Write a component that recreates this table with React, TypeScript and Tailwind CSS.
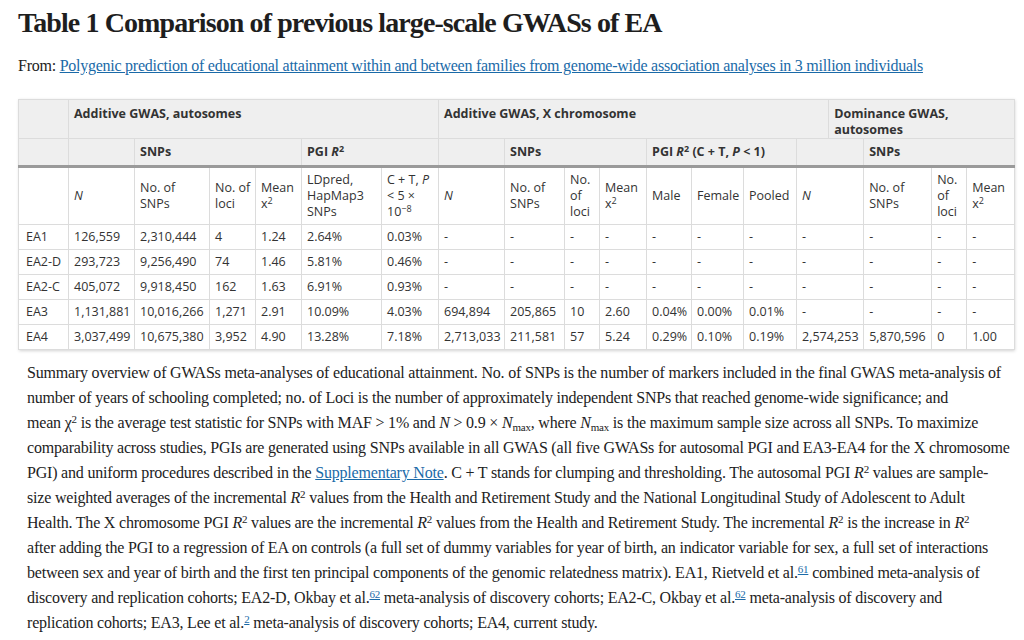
import React from "react";

const serif = { fontFamily: '"Liberation Serif", "Times New Roman", serif' };
const sans = { fontFamily: '"Open Sans", "Liberation Sans", sans-serif' };

const widths = [50, 66, 75, 46, 46, 80, 57, 66, 60, 35, 47, 45, 52, 53, 32, 35, 68, 35, 48];

const rows: string[][] = [
  ["EA1", "126,559", "2,310,444", "4", "1.24", "2.64%", "0.03%", "-", "-", "-", "-", "-", "-", "-", "-", "-", "-", "-"],
  ["EA2-D", "293,723", "9,256,490", "74", "1.46", "5.81%", "0.46%", "-", "-", "-", "-", "-", "-", "-", "-", "-", "-", "-"],
  ["EA2-C", "405,072", "9,918,450", "162", "1.63", "6.91%", "0.93%", "-", "-", "-", "-", "-", "-", "-", "-", "-", "-", "-"],
  ["EA3", "1,131,881", "10,016,266", "1,271", "2.91", "10.09%", "4.03%", "694,894", "205,865", "10", "2.60", "0.04%", "0.00%", "0.01%", "-", "-", "-", "-"],
  ["EA4", "3,037,499", "10,675,380", "3,952", "4.90", "13.28%", "7.18%", "2,713,033", "211,581", "57", "5.24", "0.29%", "0.10%", "0.19%", "2,574,253", "5,870,596", "0", "1.00"],
];

const th = "border border-[#dcdcdc] bg-[#efefef] px-[5px] text-left font-bold text-[#333] whitespace-nowrap";
const thRule = `${th} border-b-[3px] border-b-[#9a9a9a]`;
const td = "border border-[#dcdcdc] pl-[5px] pr-[2px] text-left font-normal text-[#333] whitespace-nowrap";

const Sup = ({ children }: { children: React.ReactNode }) => (
  <sup className="text-[11px] leading-none">{children}</sup>
);

const Ref = ({ n }: { n: string }) => (
  <sup className="text-[11px] leading-none text-[#1a6aa8] underline">{n}</sup>
);

const I = ({ children }: { children: React.ReactNode }) => <i>{children}</i>;

const Nmax = () => (
  <>
    <I>N</I>
    <sub className="text-[11px] leading-none">max</sub>
  </>
);

const MeanX = () => (
  <>
    Mean
    <br />
    x<sup className="text-[9px]">2</sup>
  </>
);

export default function App() {
  return (
    <div className="min-h-[640px] w-[1024px] overflow-hidden bg-white text-[#222]">
      <div className="px-[18px] pt-[6px]">
        <h1 style={serif} className="text-[28px] font-bold leading-[34px] tracking-[-0.9px] text-[#1e1e1e]">
          Table 1 Comparison of previous large-scale GWASs of EA
        </h1>
        <p style={serif} className="mt-[14px] whitespace-nowrap text-[16px] leading-[24px] tracking-[-0.25px] text-[#222]">
          From:{" "}
          <a className="text-[#1a6aa8] underline">
            Polygenic prediction of educational attainment within and between families from genome-wide association analyses in 3 million individuals
          </a>
        </p>

        <div className="mt-[21px] w-[996px] shadow-[1px_1px_3px_rgba(0,0,0,0.18)]">
          <table style={sans} className="w-[996px] table-fixed border-collapse text-[12.5px] leading-[16px]">
            <colgroup>
              {widths.map((w, i) => (
                <col key={i} style={{ width: w }} />
              ))}
            </colgroup>
            <thead>
              <tr className="h-[38px]">
                <th className={th} />
                <th className={`${th} align-top pt-[6px]`} colSpan={6}>
                  Additive GWAS, autosomes
                </th>
                <th className={`${th} align-top pt-[6px]`} colSpan={8}>
                  Additive GWAS, X chromosome
                </th>
                <th className={`${th} align-top pt-[6px]`} colSpan={4}>
                  Dominance GWAS,
                  <br />
                  autosomes
                </th>
              </tr>
              <tr className="h-[28px]">
                <th className={thRule} />
                <th className={thRule} />
                <th className={thRule} colSpan={3}>
                  SNPs
                </th>
                <th className={thRule} colSpan={2}>
                  PGI <I>R</I>
                  <sup className="text-[9px]">2</sup>
                </th>
                <th className={thRule} />
                <th className={thRule} colSpan={3}>
                  SNPs
                </th>
                <th className={thRule} colSpan={3}>
                  PGI <I>R</I>
                  <sup className="text-[9px]">2</sup> (C + T, <I>P</I> &lt; 1)
                </th>
                <th className={thRule} colSpan={2} />
                <th className={thRule} colSpan={3}>
                  SNPs
                </th>
              </tr>
              <tr className="h-[58px]">
                <td className={td} />
                <td className={td}>
                  <I>N</I>
                </td>
                <td className={td}>
                  No. of
                  <br />
                  SNPs
                </td>
                <td className={td}>
                  No. of
                  <br />
                  loci
                </td>
                <td className={td}>
                  <MeanX />
                </td>
                <td className={td}>
                  LDpred,
                  <br />
                  HapMap3
                  <br />
                  SNPs
                </td>
                <td className={td}>
                  C + T, <I>P</I>
                  <br />
                  &lt; 5 ×
                  <br />
                  10<sup className="text-[9px]">−8</sup>
                </td>
                <td className={td}>
                  <I>N</I>
                </td>
                <td className={td}>
                  No. of
                  <br />
                  SNPs
                </td>
                <td className={td}>
                  No.
                  <br />
                  of
                  <br />
                  loci
                </td>
                <td className={td}>
                  <MeanX />
                </td>
                <td className={td}>Male</td>
                <td className={td}>Female</td>
                <td className={td}>Pooled</td>
                <td className={td} colSpan={2}>
                  <I>N</I>
                </td>
                <td className={td}>
                  No. of
                  <br />
                  SNPs
                </td>
                <td className={td}>
                  No.
                  <br />
                  of
                  <br />
                  loci
                </td>
                <td className={td}>
                  <MeanX />
                </td>
              </tr>
            </thead>
            <tbody>
              {rows.map((r) => (
                <tr key={r[0]} className="h-[25px]">
                  {r.map((c, i) => (
                    <td
                      key={i}
                      className={`${td} ${i === 0 ? "pl-[7px]" : ""}`}
                      colSpan={i === 14 ? 2 : 1}
                    >
                      {c}
                    </td>
                  ))}
                </tr>
              ))}
            </tbody>
          </table>
        </div>

        <div style={serif} className="mt-[10px] pl-[9px] whitespace-nowrap text-[16px] leading-[25px] tracking-[-0.2px] text-[#222]">
          <div>
            Summary overview of GWASs meta-analyses of educational attainment. No. of SNPs is the number of markers included in the final GWAS meta-analysis of
          </div>
          <div>
            number of years of schooling completed; no. of Loci is the number of approximately independent SNPs that reached genome-wide significance; and
          </div>
          <div>
            mean χ<Sup>2</Sup> is the average test statistic for SNPs with MAF &gt; 1% and <I>N</I> &gt; 0.9 × <Nmax />, where <Nmax /> is the maximum sample size across all SNPs. To maximize
          </div>
          <div>
            comparability across studies, PGIs are generated using SNPs available in all GWAS (all five GWASs for autosomal PGI and EA3-EA4 for the X chromosome
          </div>
          <div>
            PGI) and uniform procedures described in the <a className="text-[#1a6aa8] underline">Supplementary Note</a>. C + T stands for clumping and thresholding. The autosomal PGI <I>R</I>
            <Sup>2</Sup> values are sample-
          </div>
          <div>
            size weighted averages of the incremental <I>R</I>
            <Sup>2</Sup> values from the Health and Retirement Study and the National Longitudinal Study of Adolescent to Adult
          </div>
          <div>
            Health. The X chromosome PGI <I>R</I>
            <Sup>2</Sup> values are the incremental <I>R</I>
            <Sup>2</Sup> values from the Health and Retirement Study. The incremental <I>R</I>
            <Sup>2</Sup> is the increase in <I>R</I>
            <Sup>2</Sup>
          </div>
          <div>
            after adding the PGI to a regression of EA on controls (a full set of dummy variables for year of birth, an indicator variable for sex, a full set of interactions
          </div>
          <div>
            between sex and year of birth and the first ten principal components of the genomic relatedness matrix). EA1, Rietveld et al.
            <Ref n="61" /> combined meta-analysis of
          </div>
          <div>
            discovery and replication cohorts; EA2-D, Okbay et al.
            <Ref n="62" /> meta-analysis of discovery cohorts; EA2-C, Okbay et al.
            <Ref n="62" /> meta-analysis of discovery and
          </div>
          <div>
            replication cohorts; EA3, Lee et al.
            <Ref n="2" /> meta-analysis of discovery cohorts; EA4, current study.
          </div>
        </div>
      </div>
    </div>
  );
}
